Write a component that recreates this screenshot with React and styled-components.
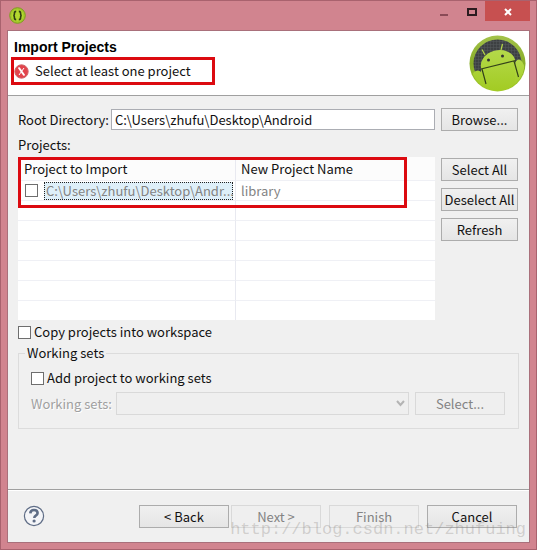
import React, { useState } from 'react';
import styled, { createGlobalStyle } from 'styled-components';

const GlobalStyle = createGlobalStyle`
  * {
    box-sizing: border-box;
  }
  body {
    margin: 0;
    font: 13px/16px 'Noto Sans CJK SC', 'Noto Sans', sans-serif;
    color: #111;
  }
  button, input, select {
    font: inherit;
    color: inherit;
    margin: 0;
  }
`;

const Window = styled.div`
  min-height: 100vh;
  display: flex;
  flex-direction: column;
  padding: 0 6px 6px;
  background-color: #d1848f;
  border: 1px solid #a9626e;
`;

const TitleBar = styled.div`
  height: 29px;
  display: flex;
  justify-content: space-between;
  align-items: flex-start;
  padding-left: 2px;
  > svg {
    margin-top: 6px;
  }
`;

const WindowControls = styled.div`
  display: flex;
`;

const ControlButton = styled.button`
  width: ${({ $close }) => ($close ? '45px' : '27px')};
  height: 20px;
  display: flex;
  justify-content: center;
  align-items: center;
  padding: 2px 0 0;
  border: 0;
  background-color: ${({ $close }) => ($close ? '#c75050' : 'transparent')};
`;

const Dialog = styled.main`
  flex: 1;
  display: flex;
  flex-direction: column;
  border: 1px solid #a9707b;
  background-color: #f0f0f0;
`;

const Header = styled.header`
  height: 65px;
  display: flex;
  justify-content: space-between;
  align-items: flex-start;
  padding: 4px 3px 0;
  background-color: #fff;
  border-bottom: 1px solid #a0a0a0;
`;

const Title = styled.h1`
  margin: 4px 0 2px 3px;
  font: bold 14px/16px 'Liberation Sans', Arial, sans-serif;
  color: #000;
`;

const Message = styled.div`
  width: 204px;
  height: 28px;
  display: flex;
  align-items: center;
  gap: 6px;
  border: 3px solid #dc0a10;
`;

const Content = styled.div`
  flex: 1;
  padding: 12px 10px 0;
`;

const Columns = styled.div`
  display: grid;
  grid-template-columns: 1fr 77px;
  column-gap: 6px;
  align-items: ${({ $top }) => ($top ? 'start' : 'center')};
  padding-right: 1px;
`;

const DirectoryField = styled.div`
  display: flex;
  align-items: center;
  gap: 2px;
`;

const TextInput = styled.input`
  flex: 1;
  min-width: 0;
  height: 21px;
  padding: 0 3px;
  border: 1px solid #abadb3;
  background-color: #fff;
`;

const Button = styled.button`
  height: 23px;
  min-width: ${({ $wide }) => ($wide ? '90px' : '0')};
  padding: 0;
  white-space: nowrap;
  border: 1px solid #acacac;
  background-image: linear-gradient(#f0f0f0, #e5e5e5);
  &:disabled {
    color: #838383;
    border-color: #d9d9d9;
    background: #efefef;
  }
`;

const ButtonColumn = styled.div`
  display: flex;
  flex-direction: column;
  gap: 7px;
  padding-top: 1px;
`;

const SectionLabel = styled.div`
  margin: 6px 0 4px;
`;

const TableWrap = styled.div`
  position: relative;
`;

const Highlight = styled.div`
  position: absolute;
  top: 0;
  left: 0;
  width: 389px;
  height: 51px;
  border: 3px solid #dc0a10;
  pointer-events: none;
`;

const ProjectTable = styled.table`
  width: 100%;
  table-layout: fixed;
  border-collapse: separate;
  border-spacing: 0;
  background-color: #fff;
  th, td {
    height: 20px;
    padding: 0 5px;
    text-align: left;
    font-weight: normal;
    border-bottom: 1px solid #eff0f5;
  }
  th {
    height: 24px;
    background-color: #fcfcfc;
  }
  td {
    color: #838383;
  }
  th:first-child, td:first-child {
    width: 218px;
    padding: 0 2px 0 6px;
    border-right: 1px solid #e8e9f0;
  }
  tr:last-child td {
    height: 19px;
    border-bottom: 0;
  }
`;

const PathCell = styled.div`
  display: flex;
  align-items: center;
  gap: 6px;
  padding-left: 1px;
`;

const PathLabel = styled.label`
  flex: 1;
  min-width: 0;
  white-space: nowrap;
  padding-left: 1px;
  border: 1px dotted #222;
  background-color: #deeff9;
`;

const Checkbox = styled.input.attrs({ type: 'checkbox' })`
  appearance: none;
  flex: none;
  width: 13px;
  height: 13px;
  border: 1px solid #6e6e6e;
  background-color: #fff;
  &:checked {
    background-color: #4a6078;
    box-shadow: inset 0 0 0 2px #fff;
  }
`;

const CheckRow = styled.label`
  display: flex;
  align-items: center;
  gap: 3px;
`;

const Options = styled.div`
  padding-top: 4px;
`;

const WorkingSets = styled.fieldset`
  min-width: 0;
  margin: 5px 0 0;
  padding: 9px 13px 13px 12px;
  border: 1px solid #dcdcdc;
  legend {
    margin-left: -6px;
    padding: 0 2px;
  }
`;

const SetRow = styled.div`
  display: flex;
  align-items: center;
  gap: 4px;
  margin-top: 6px;
  label {
    color: #a0a0a0;
    text-shadow: 1px 1px 0 #fff;
  }
`;

const SelectBox = styled.div`
  flex: 1;
  display: grid;
  align-items: center;
  margin-right: 2px;
  > * {
    grid-area: 1 / 1;
  }
  svg {
    justify-self: end;
    margin-right: 4px;
    pointer-events: none;
  }
`;

const Select = styled.select`
  appearance: none;
  width: 100%;
  height: 23px;
  border: 1px solid #d9d9d9;
  border-radius: 0;
  background-color: #efefef;
  opacity: 1;
`;

const Footer = styled.footer`
  position: relative;
  height: 53px;
  display: flex;
  align-items: flex-start;
  padding: 15px 12px 0 15px;
  border-top: 1px solid #a0a0a0;
  box-shadow: inset 0 1px 0 #fff;
`;

const HelpButton = styled.button`
  display: flex;
  margin-right: auto;
  padding: 0;
  border: 0;
  background: none;
`;

const FooterButtons = styled.div`
  display: flex;
  gap: 8px;
`;

const StepButtons = styled.div`
  display: flex;
  gap: 2px;
`;

const Watermark = styled.div`
  position: absolute;
  right: 3px;
  bottom: 0;
  font: 17px/24px 'Liberation Mono', monospace;
  color: rgba(130, 125, 120, 0.3);
  white-space: nowrap;
  pointer-events: none;
`;

function AppIcon() {
  return (
    <svg width="17" height="17" viewBox="0 0 17 17">
      <circle cx="8.5" cy="8.5" r="7.8" fill="#a4c92a" stroke="#7f9a22" />
      <circle cx="8.5" cy="8.5" r="5.8" fill="#b4d82f" />
      <path
        d="M7.2 4.4q-1.8 0-1.8 1.8v1.1q0 1.2-1.2 1.2 1.2 0 1.2 1.2v1.1q0 1.8 1.8 1.8M9.8 4.4q1.8 0 1.8 1.8v1.1q0 1.2 1.2 1.2-1.2 0-1.2 1.2v1.1q0 1.8-1.8 1.8"
        fill="none"
        stroke="#2f3d12"
        strokeWidth="1.6"
      />
    </svg>
  );
}

function ErrorIcon() {
  return (
    <svg width="15" height="15" viewBox="0 0 15 15">
      <circle cx="7.5" cy="7.5" r="6.7" fill="#e2444c" stroke="#d0686c" />
      <path d="m5 4 5 7" stroke="#fff" strokeWidth="2" />
      <path d="m10 4-5 7M4 4h2M9 11h2" stroke="#fff" />
    </svg>
  );
}

function AndroidLogo() {
  return (
    <svg width="57" height="57" viewBox="0 0 57 57">
      <defs>
        <linearGradient id="rim" x1="0" y1="0" x2="0" y2="1">
          <stop offset="0" stopColor="#a3c24a" />
          <stop offset="0.5" stopColor="#88ad28" />
          <stop offset="1" stopColor="#a4cc28" />
        </linearGradient>
        <linearGradient id="robot" x1="0" y1="0" x2="0" y2="1">
          <stop offset="0" stopColor="#b4d94a" />
          <stop offset="1" stopColor="#a2cb22" />
        </linearGradient>
        <pattern id="grid" width="3" height="3" patternUnits="userSpaceOnUse">
          <rect width="3" height="3" fill="#3d4042" />
          <path d="M0 0h3M0 0v3" stroke="#55595b" />
        </pattern>
        <clipPath id="disc">
          <circle cx="28.5" cy="28.5" r="27" />
        </clipPath>
      </defs>
      <circle cx="28.5" cy="28.5" r="28" fill="url(#rim)" />
      <circle cx="28.5" cy="28.5" r="24" fill="url(#grid)" />
      <g clipPath="url(#disc)">
        <path d="M12.3 34A17.5 14 -14 0 1 46 24.5V30L57 40V57H0V44l5-7q4-3 7 0z" fill="url(#robot)" />
        <path d="M46 30q0-5 4-5.5 4 .5 7 12v20H46z" fill="url(#robot)" />
        <path d="M12 34 46.5 25.5M13 34l4 15M45 26l4.500 16" fill="none" stroke="#33411a" strokeWidth="1.2" />
        <path d="m16 20-3-5.5M32 15l1.500-6" stroke="#b4d646" strokeWidth="1.2" />
        <circle cx="19.5" cy="25" r="1.5" fill="#333" />
        <circle cx="33.5" cy="21" r="1.5" fill="#333" />
      </g>
    </svg>
  );
}

function HelpIcon() {
  return (
    <svg width="22" height="22" viewBox="0 0 22 22">
      <circle cx="11" cy="11" r="9.6" fill="#f4f5f8" stroke="#5f6d86" strokeWidth="1.2" />
      <path d="M7.3 8.4q.2-3.4 3.7-3.4t3.6 3q0 1.6-1.8 2.7-1.5.9-1.5 2.4" fill="none" stroke="#5f6d86" strokeWidth="2.6" />
      <circle cx="11.1" cy="16" r="1.6" fill="#5f6d86" />
    </svg>
  );
}

const EMPTY_ROWS = [1, 2, 3, 4, 5, 6];

export default function App() {
  const [directory, setDirectory] = useState('C:\\Users\\zhufu\\Desktop\\Android');

  return (
    <>
      <GlobalStyle />
      <Window>
        <TitleBar>
          <AppIcon />
          <WindowControls>
            <ControlButton aria-label="Minimize">
              <svg width="9" height="8"><path d="M0 6h8v2H0z" fill="#8a4b57" /></svg>
            </ControlButton>
            <ControlButton aria-label="Maximize">
              <svg width="10" height="8"><path d="M1 1h8v6H1z" fill="none" stroke="#2b1c20" strokeWidth="2" /></svg>
            </ControlButton>
            <ControlButton $close aria-label="Close">
              <svg width="8" height="8"><path d="m1 1 6 6M7 1 1 7" stroke="#fff" strokeWidth="2" /></svg>
            </ControlButton>
          </WindowControls>
        </TitleBar>
        <Dialog>
          <Header>
            <div>
              <Title>Import Projects</Title>
              <Message role="alert">
                <ErrorIcon />
                Select at least one project
              </Message>
            </div>
            <AndroidLogo />
          </Header>
          <Content>
            <Columns>
              <DirectoryField>
                <label htmlFor="directory">Root Directory:</label>
                <TextInput id="directory" value={directory} onChange={(e) => setDirectory(e.target.value)} />
              </DirectoryField>
              <Button>Browse...</Button>
            </Columns>
            <SectionLabel>Projects:</SectionLabel>
            <Columns $top>
              <TableWrap>
                <ProjectTable aria-label="Projects">
                  <thead>
                    <tr>
                      <th>Project to Import</th>
                      <th>New Project Name</th>
                    </tr>
                  </thead>
                  <tbody>
                    <tr>
                      <td>
                        <PathCell>
                          <Checkbox id="library" />
                          <PathLabel htmlFor="library">C:\Users\zhufu\Desktop\Andr...</PathLabel>
                        </PathCell>
                      </td>
                      <td>library</td>
                    </tr>
                    {EMPTY_ROWS.map((row) => (
                      <tr key={row}>
                        <td />
                        <td />
                      </tr>
                    ))}
                  </tbody>
                </ProjectTable>
                <Highlight />
              </TableWrap>
              <ButtonColumn>
                <Button>Select All</Button>
                <Button>Deselect All</Button>
                <Button>Refresh</Button>
              </ButtonColumn>
            </Columns>
            <Options>
              <CheckRow>
                <Checkbox />
                Copy projects into workspace
              </CheckRow>
              <WorkingSets>
                <legend>Working sets</legend>
                <CheckRow>
                  <Checkbox />
                  Add project to working sets
                </CheckRow>
                <SetRow>
                  <label htmlFor="sets">Working sets:</label>
                  <SelectBox>
                    <Select id="sets" disabled />
                    <svg width="9" height="8"><path d="m1 1 3.5 4L8 1" fill="none" stroke="#b4b4b4" strokeWidth="2" /></svg>
                  </SelectBox>
                  <Button $wide disabled>Select...</Button>
                </SetRow>
              </WorkingSets>
            </Options>
          </Content>
          <Footer>
            <HelpButton aria-label="Help">
              <HelpIcon />
            </HelpButton>
            <FooterButtons>
              <StepButtons>
                <Button $wide>&lt; Back</Button>
                <Button $wide disabled>Next &gt;</Button>
              </StepButtons>
              <Button $wide disabled>Finish</Button>
              <Button $wide>Cancel</Button>
            </FooterButtons>
            <Watermark>http://blog.csdn.net/zhufuing</Watermark>
          </Footer>
        </Dialog>
      </Window>
    </>
  );
}
